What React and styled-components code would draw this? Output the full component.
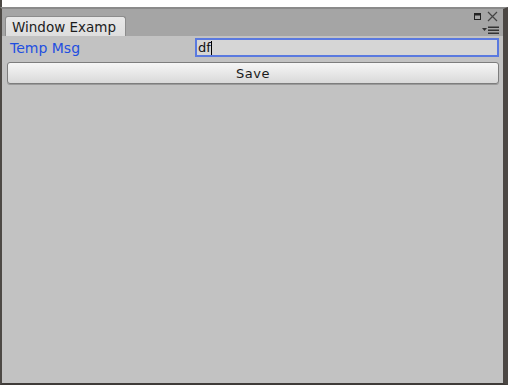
import styled, { createGlobalStyle } from 'styled-components';

const GlobalStyle = createGlobalStyle`
  html, body {
    margin: 0;
    padding: 0;
    background: #ffffff;
  }
  #root {
    width: 508px;
    height: 385px;
  }
`;

export default function App() {
  return (
    <>
      <GlobalStyle />
      <Frame>
        <TopStrip />
        <Window>
          <TitleBar>
            <Tab>Window Examp</Tab>
            <Controls>
              <ControlRow>
                <svg width="7" height="7" viewBox="0 0 7 7">
                  <rect x="0.5" y="0.5" width="6" height="6" fill="none" stroke="#222" />
                  <rect x="0" y="0" width="7" height="2.5" fill="#222" />
                </svg>
                <svg width="11" height="11" viewBox="0 0 11 11">
                  <path d="M1 1 L10 10 M10 1 L1 10" stroke="#444" strokeWidth="1.2" />
                </svg>
              </ControlRow>
              <svg width="17" height="8" viewBox="0 0 17 8">
                <path d="M0 2 L5 2 L2.5 5 Z" fill="#333" />
                <rect x="6" y="0.5" width="11" height="1.5" fill="#333" />
                <rect x="6" y="3.5" width="11" height="1.5" fill="#333" />
                <rect x="6" y="6.5" width="11" height="1.5" fill="#333" />
              </svg>
            </Controls>
          </TitleBar>
          <Content>
            <FieldRow>
              <Label>Temp Msg</Label>
              <TextField>df<Caret /></TextField>
            </FieldRow>
            <Button>Save</Button>
          </Content>
        </Window>
      </Frame>
    </>
  );
}

const Frame = styled.div`
  width: 508px;
  height: 385px;
  display: flex;
  flex-direction: column;
  background: #ffffff;
  font-family: "DejaVu Sans", "Liberation Sans", sans-serif;
`;

const TopStrip = styled.div`
  height: 7px;
  background: #ffffff;
  border-left: 2px solid #4d4945;
`;

const Window = styled.div`
  flex: 1;
  display: flex;
  flex-direction: column;
  border-top: 2px solid #8a8a8a;
  border-left: 2px solid #4d4945;
  border-right: 5px solid #4b4744;
  border-bottom: 2px solid #3f3b38;
  background: #c2c2c2;
`;

const TitleBar = styled.div`
  height: 27px;
  background: #a5a5a5;
  display: flex;
  align-items: flex-end;
  justify-content: space-between;
  padding-left: 3px;
  padding-right: 4px;
  box-sizing: border-box;
`;

const Tab = styled.div`
  width: 121px;
  height: 20px;
  box-sizing: border-box;
  background: linear-gradient(#e8e8e8, #dedede);
  border: 1px solid #8c8c8c;
  border-bottom: none;
  border-radius: 3px 3px 0 0;
  padding: 1px 0 0 6px;
  font-size: 13.5px;
  color: #1c1c1c;
  line-height: 18px;
  white-space: nowrap;
  overflow: hidden;
`;

const Controls = styled.div`
  align-self: stretch;
  display: flex;
  flex-direction: column;
  align-items: flex-end;
  justify-content: space-between;
  padding: 2px 0 2px;
`;

const ControlRow = styled.div`
  display: flex;
  align-items: center;
  gap: 6px;
  margin-right: 1px;
`;

const Content = styled.div`
  display: flex;
  flex-direction: column;
  gap: 5px;
  padding: 2px 4px 0 5px;
`;

const FieldRow = styled.div`
  display: flex;
  align-items: center;
  height: 19px;
`;

const Label = styled.div`
  width: 188px;
  box-sizing: border-box;
  padding-left: 3px;
  font-size: 14px;
  color: #1f4fe0;
`;

const TextField = styled.div`
  flex: 1;
  height: 19px;
  box-sizing: border-box;
  border: 2px solid #5a79df;
  background: #d6d6d6;
  font-size: 13px;
  line-height: 15px;
  color: #111;
  padding-left: 1px;
  display: flex;
  align-items: center;
`;

const Caret = styled.span`
  display: inline-block;
  width: 1px;
  height: 14px;
  background: #000;
`;

const Button = styled.div`
  height: 22px;
  box-sizing: border-box;
  border: 1px solid #7d7d7d;
  border-radius: 3px;
  background: linear-gradient(#f6f6f6, #d9d9d9);
  box-shadow: 0 1px 0 #9a9a9a;
  font-size: 13px;
  color: #1a1a1a;
  display: flex;
  align-items: center;
  justify-content: center;
  letter-spacing: 0.5px;
`;
